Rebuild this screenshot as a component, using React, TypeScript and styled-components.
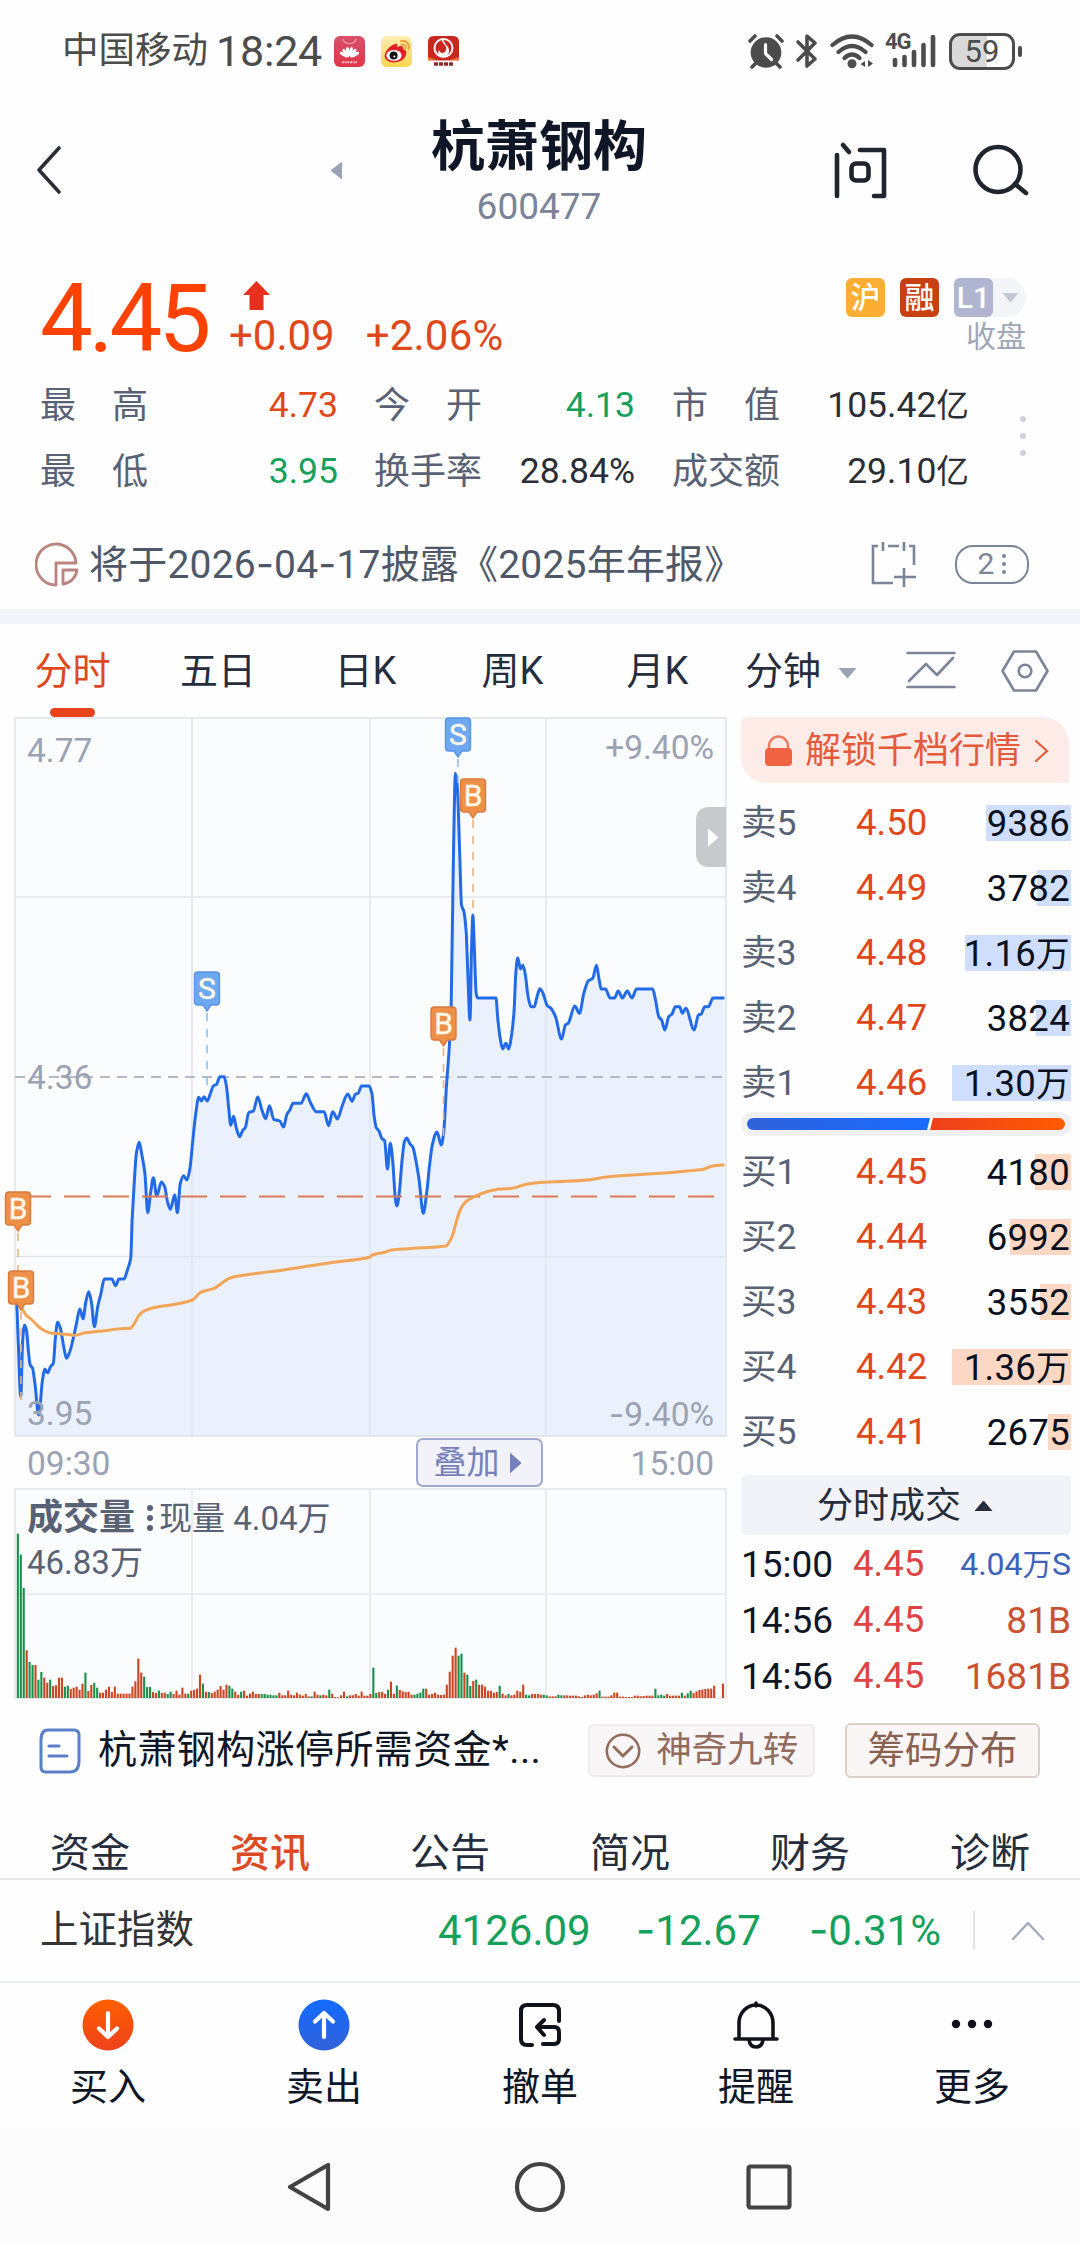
import React from "react";
import styled, { createGlobalStyle } from "styled-components";

const RED = "#e0471b";
const GREEN = "#15a05c";
const INK = "#0f1626";
const SLATE = "#596274";
const MUTED = "#9aa2b3";

const GlobalStyle = createGlobalStyle`
  * { box-sizing: border-box; }
  body { margin: 0; background: #fefefe; }
`;

const Screen = styled.div`
  width: 1080px;
  height: 2244px;
  overflow: hidden;
  display: flex;
  flex-direction: column;
  background: #fefefe;
  color: ${INK};
  font-family: Roboto, "Noto Sans CJK SC", sans-serif;
  white-space: nowrap;
  svg { display: block; flex: none; }
`;

/* ---------- shared text ---------- */

const Text = styled.span<{ $size: number; $color?: string; $ls?: number; $weight?: number; $left?: number }>`
  font-size: ${(p) => p.$size}px;
  line-height: 1;
  color: ${(p) => p.$color ?? INK};
  letter-spacing: ${(p) => p.$ls ?? 0}px;
  font-weight: ${(p) => p.$weight ?? 400};
  margin-left: ${(p) => p.$left ?? 0}px;
`;

const Hyphen = styled.span`
  font-family: Inter, Roboto, sans-serif;
`;

const Unit = styled.span`
  font-size: 0.92em;
`;

/* Numbers with a wide hyphen and a slightly smaller 万/亿 unit. */
const Num = ({ children }: { children: string }) => (
  <>
    {children.split(/(-|万|亿)/).map((part, i) => {
      if (part === "-") return <Hyphen key={i}>-</Hyphen>;
      if (part === "万" || part === "亿") return <Unit key={i}>{part}</Unit>;
      return part;
    })}
  </>
);

/* ---------- status bar ---------- */

const StatusBar = styled.div`
  height: 102px;
  padding: 0 58px 0 62px;
  display: flex;
  align-items: center;
  justify-content: space-between;
`;

const StatusGroup = styled.div<{ $gap?: number }>`
  display: flex;
  align-items: center;
  gap: ${(p) => p.$gap ?? 0}px;
`;

const AppIcons = styled.div`
  display: flex;
  gap: 16px;
  margin-left: 12px;
`;

const Battery = styled.div`
  width: 66px;
  height: 37px;
  margin-left: 12px;
  border: 3px solid #4c4c4c;
  border-radius: 11px;
  background: linear-gradient(90deg, #d9d9d9 59%, #fff 59%);
  display: flex;
  align-items: center;
  justify-content: center;
`;

const BatteryTip = styled.div`
  width: 4px;
  height: 11px;
  margin-left: 3px;
  border-radius: 2px;
  background: #4c4c4c;
`;

/* ---------- header ---------- */

const Header = styled.header`
  height: 138px;
  padding: 0 51px 2px 35px;
  display: grid;
  grid-template-columns: 291px 426px 1fr;
  align-items: center;
`;

const HeaderLeft = styled.div`
  display: flex;
  justify-content: space-between;
  align-items: center;
  margin-right: -16px;
`;

const TitleBlock = styled.div`
  display: flex;
  flex-direction: column;
  align-items: center;
  gap: 13px;
  padding-top: 5px;
`;

const HeaderActions = styled.div`
  display: flex;
  justify-content: space-between;
  padding-left: 82px;
`;

/* ---------- quote ---------- */

const Quote = styled.section`
  height: 250px;
  padding: 30px 0 0 40px;
`;

const PriceRow = styled.div`
  height: 103px;
  display: flex;
`;

const Price = styled.div`
  width: 189px;
  padding-top: 2px;
  font-size: 94px;
  line-height: 94px;
  letter-spacing: -4px;
  color: #ff4200;
`;

const Change = styled.div`
  width: 598px;
  display: flex;
  flex-direction: column;
  padding-top: 11px;
`;

const ArrowUp = styled.svg`
  margin-left: -2px;
`;

const ChangeNumbers = styled.div`
  display: flex;
  gap: 31px;
  margin-top: 4px;
`;

const Badges = styled.div`
  width: 199px;
  display: flex;
  flex-direction: column;
  align-items: flex-end;
  gap: 5px;
  padding-top: 8px;
`;

const BadgeRow = styled.div`
  width: 180px;
  height: 39px;
  display: flex;
  gap: 15px;
  align-items: center;
  border-radius: 8px 20px 20px 8px;
  background: linear-gradient(90deg, #fefefe 60%, #f4f5f8 60%);
`;

const Badge = styled.div<{ $bg: string }>`
  flex: none;
  width: 39px;
  height: 39px;
  border-radius: 6px;
  display: flex;
  align-items: center;
  justify-content: center;
  font-size: 30px;
  line-height: 1;
  font-weight: 500;
  color: #fff;
  background: ${(p) => p.$bg};
`;

const BadgeMenu = styled.div`
  margin-left: -6px;
`;

const Stats = styled.div`
  display: flex;
  align-items: center;
`;

const StatGrid = styled.div`
  width: 929px;
  display: grid;
  grid-template-columns: 108px 190px 36px 108px 153px 37px 108px 189px;
  grid-template-rows: 66px 66px;
  align-items: center;
`;

const StatLabel = styled.div<{ $col: number }>`
  grid-column: ${(p) => p.$col};
  font-size: 36px;
  line-height: 1;
  color: ${SLATE};
`;

const StatValue = styled.div<{ $color: string }>`
  text-align: right;
  font-size: 35.5px;
  line-height: 1;
  color: ${(p) => p.$color};
`;

const Dots = styled.div<{ $gap: number; $size: number; $color: string; $left: number; $lift?: number }>`
  display: flex;
  flex-direction: column;
  gap: ${(p) => p.$gap}px;
  margin-left: ${(p) => p.$left}px;
  margin-bottom: ${(p) => p.$lift ?? 0}px;
  i {
    width: ${(p) => p.$size}px;
    height: ${(p) => p.$size}px;
    border-radius: 50%;
    background: ${(p) => p.$color};
  }
`;

const Notice = styled.div`
  height: 119px;
  padding: 29px 51px 0 35px;
  display: flex;
  align-items: center;
`;

const NoticeText = styled.div`
  width: 782px;
  margin-left: 10px;
  font-size: 39px;
  line-height: 1;
  letter-spacing: 0.2px;
  color: #4f5869;
`;

const CountPill = styled.div`
  width: 74px;
  height: 39px;
  margin-left: auto;
  border: 2.5px solid #7c8598;
  border-radius: 18px;
  display: flex;
  align-items: center;
  justify-content: center;
  font-size: 30px;
  line-height: 1;
  color: #7c8598;
`;

const Band = styled.div`
  height: 15px;
  background: #f3f5fa;
`;

/* ---------- period tabs ---------- */

const PeriodTabs = styled.nav`
  height: 93px;
  display: grid;
  grid-template-columns: 145px 146px 149px 145px 145px 154px 94px 1fr;
`;

const PeriodTab = styled.div<{ $active?: boolean }>`
  position: relative;
  display: flex;
  align-items: center;
  justify-content: center;
  padding-top: 1px;
  font-size: 38px;
  line-height: 1;
  color: ${(p) => (p.$active ? RED : "#262d3d")};
  &::after {
    content: "";
    display: ${(p) => (p.$active ? "block" : "none")};
    position: absolute;
    bottom: 0;
    width: 45px;
    height: 9px;
    border-radius: 5px;
    background: #e8431a;
  }
`;

const PeriodMenu = styled.div`
  display: flex;
  align-items: center;
  gap: 17px;
  padding-left: 15px;
`;

const MenuCaret = styled.div`
  padding-top: 6px;
`;

const IconCell = styled.div<{ $right?: number }>`
  display: flex;
  align-items: center;
  justify-content: center;
  padding-right: ${(p) => p.$right ?? 0}px;
`;

/* ---------- body: charts + book ---------- */

const Body = styled.main`
  height: 981px;
  display: grid;
  grid-template-columns: 741px 330px;
`;

const ChartColumn = styled.div`
  position: relative;
  display: flex;
  flex-direction: column;
`;

const AxisRow = styled.div`
  height: 51px;
  padding: 0 27px 0 27px;
  display: flex;
  align-items: center;
  margin-top: -1px;
`;

const AxisTime = styled.div`
  padding-top: 3px;
  font-size: 33.5px;
  line-height: 1;
  color: ${MUTED};
`;

const OverlayButton = styled.div`
  width: 127px;
  height: 49px;
  margin-left: 306px;
  margin-right: auto;
  padding: 0 4px 0 0;
  border: 2px solid #9da9d0;
  border-radius: 7px;
  background: #f2f3fa;
  display: flex;
  align-items: center;
  justify-content: center;
  gap: 11px;
`;

const ChartLabel = styled.div<{ $top: number; $right?: boolean }>`
  position: absolute;
  top: ${(p) => p.$top}px;
  ${(p) => (p.$right ? "right: 27px;" : "left: 27px;")}
  font-size: 33.5px;
  line-height: 34px;
  color: ${MUTED};
`;

const VolumeLegend = styled.div`
  position: absolute;
  top: 783px;
  left: 27px;
  display: flex;
  flex-direction: column;
  gap: 8px;
`;

const LegendLine = styled.div`
  height: 36px;
  display: flex;
  align-items: center;
`;

const DrawerHandle = styled.div`
  position: absolute;
  top: 90px;
  left: 696px;
  width: 30px;
  height: 60px;
  border-radius: 12px 0 0 12px;
  background: #c8cacd;
  display: flex;
  align-items: center;
  justify-content: center;
  padding-left: 4px;
`;

const Book = styled.div`
  display: flex;
  flex-direction: column;
`;

const Unlock = styled.div`
  width: 328px;
  height: 66px;
  margin-bottom: 7px;
  padding: 2px 22px 0 24px;
  border-radius: 6px 26px 0 26px;
  background: #fdebe8;
  display: flex;
  align-items: center;
  gap: 13px;
`;

const Level = styled.div`
  height: 65px;
  display: grid;
  grid-template-columns: 115px 90px 1fr;
  align-items: center;
`;

const LevelText = styled.div<{ $size: number; $color: string }>`
  padding-top: 2px;
  font-size: ${(p) => p.$size}px;
  line-height: 1;
  color: ${(p) => p.$color};
`;

const LevelQty = styled.div<{ $fill: number; $color: string }>`
  height: 36px;
  padding: 1px 1px 0 0;
  text-align: right;
  font-size: 36.5px;
  line-height: 36px;
  letter-spacing: 0.3px;
  color: #0a1020;
  background: linear-gradient(${(p) => p.$color}, ${(p) => p.$color}) right / ${(p) => p.$fill}px 100% no-repeat;
`;

const RatioTrack = styled.div`
  height: 24px;
  margin: -3px 0 3px;
  padding: 6px;
  border-radius: 12px;
  background: #f0f0f1;
`;

const Ratio = styled.div`
  height: 12px;
  border-radius: 6px;
  overflow: hidden;
  display: grid;
  grid-template-columns: 183px 137px;
  background: #fff;
`;

const RatioSell = styled.div`
  background: linear-gradient(90deg, #3062d8, #196bff);
  clip-path: polygon(0 0, 100% 0, calc(100% - 3px) 100%, 0 100%);
`;

const RatioBuy = styled.div`
  background: linear-gradient(90deg, #ee401c, #ff5c00);
  clip-path: polygon(3px 0, 100% 0, 100% 100%, 0 100%);
`;

const TradesHeader = styled.div`
  height: 60px;
  margin-top: 11px;
  padding: 1px 2px 0 0;
  border-radius: 6px;
  background: #f2f3f8;
  display: flex;
  align-items: center;
  justify-content: center;
  gap: 13px;
`;

const Trade = styled.div`
  height: 56px;
  padding-top: 2px;
  display: grid;
  grid-template-columns: 112px 90px 1fr;
  align-items: center;
`;

const TradeQty = styled.div<{ $color: string; $size: number }>`
  text-align: right;
  font-size: ${(p) => p.$size}px;
  line-height: 1;
  color: ${(p) => p.$color};
`;

/* ---------- lower panels ---------- */

const Promo = styled.div`
  height: 108px;
  padding: 0 40px 3px 39px;
  display: flex;
  align-items: center;
`;

const PromoText = styled.div`
  width: 491px;
  margin-left: 17px;
  font-size: 39px;
  line-height: 1;
  letter-spacing: 0.4px;
`;

const Chip = styled.div<{ $w: number; $h: number; $border: string; $bg: string; $left?: number }>`
  width: ${(p) => p.$w}px;
  height: ${(p) => p.$h}px;
  margin-left: ${(p) => p.$left ?? 0}px;
  border: 2px solid ${(p) => p.$border};
  border-radius: 6px;
  background: ${(p) => p.$bg};
  display: flex;
  align-items: center;
  justify-content: center;
  gap: 15px;
`;

const SectionTabs = styled.nav`
  height: 74px;
  border-bottom: 2px solid #e6e7e9;
  display: grid;
  grid-template-columns: repeat(6, 1fr);
`;

const SectionTab = styled.div<{ $active?: boolean }>`
  display: flex;
  align-items: center;
  justify-content: center;
  padding-top: 23px;
  font-size: 40px;
  line-height: 1;
  font-weight: ${(p) => (p.$active ? 500 : 400)};
  color: ${(p) => (p.$active ? "#dc4a26" : "#262d3d")};
`;

const IndexRow = styled.div`
  height: 101px;
  padding-left: 40px;
  display: grid;
  grid-template-columns: 398px 198px 173px 164px 38px 1fr;
  align-items: center;
`;

const Separator = styled.div`
  width: 2px;
  height: 39px;
  background: #e2e4e8;
`;

const ActionBar = styled.nav`
  height: 149px;
  border-top: 2px solid #ebeeee;
  display: grid;
  grid-template-columns: repeat(5, 1fr);
`;

const Action = styled.div`
  display: flex;
  flex-direction: column;
  align-items: center;
  padding-top: 16px;
  gap: 17px;
`;

const SystemBar = styled.div`
  flex: 1;
  background: #fcfcfc;
  display: flex;
  align-items: center;
  padding-left: 286px;
`;

const SystemKey = styled.div<{ $gap: number }>`
  margin-right: ${(p) => p.$gap}px;
`;

/* ---------- icons ---------- */

const Triangle = ({ w, h, dir, color }: { w: number; h: number; dir: "left" | "right" | "up" | "down"; color: string }) => {
  const pts = {
    left: `${w},1 ${w},${h - 1} 1,${h / 2}`,
    right: `0,1 0,${h - 1} ${w - 1},${h / 2}`,
    up: `1,${h} ${w - 1},${h} ${w / 2},1`,
    down: `1,0 ${w - 1},0 ${w / 2},${h - 1}`,
  }[dir];
  return (
    <svg width={w} height={h}>
      <polygon points={pts} fill={color} stroke={color} strokeWidth="1" strokeLinejoin="round" />
    </svg>
  );
};

const HuaweiIcon = () => (
  <svg width="31" height="31" viewBox="0 0 31 31">
    <defs>
      <linearGradient id="hw" x1="0" y1="0" x2="0" y2="1">
        <stop offset="0" stopColor="#d8506b" />
        <stop offset="1" stopColor="#e03548" />
      </linearGradient>
    </defs>
    <rect width="31" height="31" rx="6" fill="url(#hw)" />
    <path d="M9 3c1 6 12 6 13 0" fill="none" stroke="#f3a5b1" strokeWidth="1.2" />
    <g fill="#fff">
      {[-62, -38, -13, 13, 38, 62].map((a) => (
        <ellipse key={a} cx="15.5" cy="15.500" rx="1.700" ry="4.800" transform={`rotate(${a} 15.5 21.5)`} />
      ))}
    </g>
    <path d="M8 26.300h15" stroke="#fff" strokeWidth="2" strokeDasharray="1.800 0.900" opacity="0.750" />
  </svg>
);

const WeiboIcon = () => (
  <svg width="31" height="31" viewBox="0 0 31 31">
    <defs>
      <linearGradient id="wb" x1="0" y1="0" x2="0" y2="1">
        <stop offset="0" stopColor="#fdeeb5" />
        <stop offset="1" stopColor="#fcd54c" />
      </linearGradient>
    </defs>
    <rect width="31" height="31" rx="6" fill="url(#wb)" />
    <path d="M14 8c2-1 3 0 2 3 4-2 7-1 6 2 4 1 4 5 2 8-3 6-16 8-20 1-2-5 5-13 10-14z" fill="#df2127" />
    <ellipse cx="13" cy="19.400" rx="7.600" ry="5.400" fill="#fff" />
    <circle cx="12.600" cy="19.600" r="4" fill="#111" />
    <circle cx="13.400" cy="20.600" r="1" fill="#fff" />
    <path d="M20 5c5-1 9 3 7.500 8M20.500 8.500c3-.4 4.800 1.500 4 4" fill="none" stroke="#f0a23a" strokeWidth="2" strokeLinecap="round" />
  </svg>
);

const FlameIcon = () => (
  <svg width="31" height="31" viewBox="0 0 31 31">
    <path d="M6 0h19q6 0 6 6v19H0V6q0-6 6-6z" fill="#c9271f" />
    <path d="M0 21q15 7 31 0v3.500H0z" fill="#e9722f" />
    <circle cx="15.500" cy="12" r="9" fill="none" stroke="#fff" strokeWidth="2" />
    <path d="M15 2c-4 4 5 7 3 12-1 4-6 4-7 0-2 3 0 7 4 7 6 0 8-7 4-11-2-3-4-5-4-8z" fill="#fff" />
    <rect y="24.500" width="31" height="7" fill="#fff" />
    <path d="M6 28h20" stroke="#8f2a2a" strokeWidth="3.600" strokeDasharray="4 1" />
  </svg>
);

const AlarmIcon = () => (
  <svg width="36" height="35" viewBox="0 0 36 35">
    <g stroke="#4c4c4c" strokeWidth="3.600" strokeLinecap="round" fill="none">
      <path d="M2 7l5-5M34 7l-5-5M8 29l-4 4M28 29l4 4" />
    </g>
    <circle cx="18" cy="18.500" r="15.300" fill="#4c4c4c" />
    <path d="M17.500 10.500v9l6 6" fill="none" stroke="#fff" strokeWidth="3.200" strokeLinecap="round" strokeLinejoin="round" />
  </svg>
);

const BluetoothIcon = () => (
  <svg width="24" height="36" viewBox="0 0 24 36">
    <path d="M3 9l17 17-8 7V3l8 7L3 27" fill="none" stroke="#4c4c4c" strokeWidth="3.600" strokeLinecap="round" strokeLinejoin="round" />
  </svg>
);

const WifiIcon = () => (
  <svg width="44" height="35" viewBox="0 0 44 35">
    <g fill="none" stroke="#4c4c4c" strokeWidth="4.200" strokeLinecap="round">
      <path d="M2.500 11q19.500-17 39 0M8.500 18q13.500-12 27 0M14.500 24q7.500-7 15 0" />
    </g>
    <circle cx="22" cy="29.800" r="4.500" fill="#4c4c4c" />
    <path d="M35 27v6l-4.500-3zM38 26v7l5-3.500z" fill="#4c4c4c" />
  </svg>
);

const NetworkLabel = styled.div`
  position: absolute;
  top: 0;
  left: 0;
  font-size: 22px;
  line-height: 22px;
  font-weight: 700;
  letter-spacing: -1px;
  color: #4c4c4c;
`;

const Signal = styled.div`
  position: relative;
  width: 52px;
  height: 40px;
  padding: 2px 0 0 2px;
`;

const SignalIcon = () => (
  <Signal>
    <svg width="50" height="36" viewBox="2 0 50 36">
      <g stroke="#4c4c4c" strokeWidth="4.600" strokeLinecap="round">
        <path d="M10 27v5M19.500 24v8M29 19v13M38.500 12v20M48 4v28" />
      </g>
    </svg>
    <NetworkLabel>4G</NetworkLabel>
  </Signal>
);

const AskIcon = () => (
  <svg width="53" height="58" viewBox="0 0 53 58">
    <g fill="none" stroke="#20252d" strokeWidth="4.600" strokeLinecap="round" strokeLinejoin="round">
      <path d="M3 14v41M9 4l6 7M26 9h24v46H40" />
      <rect x="17.500" y="22.500" width="17" height="17" rx="4.500" />
    </g>
  </svg>
);

const SearchIcon = () => (
  <svg width="56" height="58" viewBox="0 0 56 58">
    <g fill="none" stroke="#20252d" strokeWidth="4.600" strokeLinecap="round">
      <circle cx="25" cy="28.500" r="22.500" />
      <path d="M42 43l11 9" />
    </g>
  </svg>
);

const PieIcon = () => (
  <svg width="44" height="46" viewBox="0 0 44 46">
    <g fill="none" stroke="#bb847f" strokeWidth="2.800" strokeLinejoin="round">
      <path d="M21 44A20 20.500 0 1 1 41 22H21z" />
      <path d="M28 29h14a16 16 0 0 1-14 14z" />
    </g>
  </svg>
);

const CalendarIcon = () => (
  <svg width="46" height="47" viewBox="0 0 46 47">
    <path d="M7 5H2v37h20M17 5h11M38 5h5v19M12 1v9M33 1v9M33 27v19M23 36h22" fill="none" stroke="#7c8598" strokeWidth="2.600" />
  </svg>
);

const LineIcon = () => (
  <svg width="50" height="40" viewBox="0 0 50 40">
    <g fill="none" stroke="#7c8598" strokeWidth="2.600" strokeLinecap="round" strokeLinejoin="round">
      <path d="M1.500 2h47M1.500 36h47M3 30l17-17 11 11L47 7" />
    </g>
  </svg>
);

const HexIcon = () => (
  <svg width="48" height="42" viewBox="0 0 48 42">
    <g fill="none" stroke="#7c8598" strokeWidth="2.600" strokeLinejoin="round">
      <path d="M13 1.500h22L46.500 21 35 40.500H13L1.500 21z" />
      <circle cx="24" cy="21" r="6.300" />
    </g>
  </svg>
);

const LockIcon = () => (
  <svg width="27" height="32" viewBox="0 0 27 32">
    <path d="M4 14v-3a9.500 9.500 0 0 1 19 0v3" fill="none" stroke="#ee7a62" strokeWidth="2.400" />
    <rect y="13" width="27" height="18" rx="4" fill="#f06443" />
  </svg>
);

const BuyIcon = () => (
  <svg width="52" height="52" viewBox="0 0 52 52">
    <defs>
      <linearGradient id="buy" x1="0" y1="0" x2="0" y2="1">
        <stop offset="0" stopColor="#ff5f00" />
        <stop offset="1" stopColor="#ee421c" />
      </linearGradient>
    </defs>
    <circle cx="26" cy="26" r="25.500" fill="url(#buy)" />
    <path d="M26 14v24M17 29.500l9 8.500 9-8.500" fill="none" stroke="#fff" strokeWidth="4.200" strokeLinecap="round" strokeLinejoin="round" />
  </svg>
);

const SellIcon = () => (
  <svg width="52" height="52" viewBox="0 0 52 52">
    <defs>
      <linearGradient id="sell" x1="0" y1="0" x2="0" y2="1">
        <stop offset="0" stopColor="#146bff" />
        <stop offset="1" stopColor="#3161d8" />
      </linearGradient>
    </defs>
    <circle cx="26" cy="26" r="25.500" fill="url(#sell)" />
    <path d="M26 38V14M17 22.500l9-8.500 9 8.500" fill="none" stroke="#fff" strokeWidth="4.200" strokeLinecap="round" strokeLinejoin="round" />
  </svg>
);

const CancelIcon = () => (
  <svg width="52" height="52" viewBox="0 0 52 52">
    <g fill="none" stroke="#10131a" strokeWidth="4" strokeLinecap="round" strokeLinejoin="round">
      <path d="M18 46h-5q-6 0-6-6V12q0-6 6-6h26q6 0 6 6v10" />
      <path d="M30 21l-7 7 7 8M24 28h16q5 0 5 5v7q0 5-5 5H29" />
    </g>
  </svg>
);

const BellIcon = () => (
  <svg width="52" height="52" viewBox="0 0 52 52">
    <g fill="none" stroke="#10131a" strokeWidth="3.600" strokeLinecap="round" strokeLinejoin="round">
      <path d="M26 4v3M9 40V24a17 18 0 0 1 34 0v16M5 40h42" />
      <path d="M19 41q1 7 7 7t7-7" />
    </g>
  </svg>
);

const MoreIcon = () => (
  <svg width="52" height="52" viewBox="0 0 52 52">
    <g fill="#10131a">
      <circle cx="10" cy="25" r="4.200" />
      <circle cx="26" cy="25" r="4.200" />
      <circle cx="42" cy="25" r="4.200" />
    </g>
  </svg>
);

/* ---------- price chart ---------- */

type Pt = [number, number];

const toPoints = (s: string): Pt[] => s.trim().split(/\s+/).map((p) => p.split(",").map(Number) as Pt);

const SAMPLES_PER_PX = 2.119;
const TICKS_PER_PX = 3;

const priceSeries = toPoints(`
35,2050 38,2140 44,2330 48,2160 52,2116 56,2130 60,2190 64,2235 69,2245 74,2290 82,2385 90,2280 95,2247 101,2258 107,2240
113,2230 117,2160 122,2107 128,2125 135,2180 141,2215 148,2195 156,2150 162,2110 169,2067 176,2096 182,2045 188,2015 194,2050
200,2120 207,2060 214,2020 221,1977 237,1977 245,1997 252,1977 263,1977 270,1950 277,1915 280,1800 284,1700 289,1600 295,1567
300,1600 307,1660 313,1778 319,1720 325,1673 332,1728 342,1686 349,1700 355,1745 361,1768 370,1725 376,1778 382,1690 389,1667
396,1680 402,1650 408,1570 415,1480 421,1432 427,1443 432,1430 439,1443 446,1420 452,1398 459,1393 466,1370 475,1370 480,1400
485,1470 489,1516 495,1489 501,1525 508,1550 514,1532 520,1522 527,1478 537,1473 546,1431 555,1470 563,1496 571,1457 580,1498
593,1503 601,1521 608,1483 614,1470 621,1450 638,1450 649,1421 658,1448 670,1475 687,1475 696,1517 705,1475 715,1497 725,1458
737,1422 746,1444 753,1422 759,1420 766,1398 782,1398 788,1420 793,1490 797,1522 803,1533 809,1555 815,1562 821,1647 827,1570
832,1620 838,1740 841,1758 846,1720 852,1620 857,1565 862,1554 868,1570 875,1582 881,1620 888,1680 897,1780 904,1720 910,1640
916,1575 926,1536 935,1575 940,1540 946,1400 953,1260 956,1150 961,700 965,460 969,500 974,700 978,855 983,875 988,940 991,1050
996,1200 999,1000 1002,885 1005,980 1009,1120 1012,1134 1051,1134 1055,1200 1060,1255 1065,1287 1072,1270 1078,1287 1083,1255
1089,1180 1093,1060 1097,1013 1103,1047 1108,1036 1113,1062 1119,1130 1125,1160 1132,1160 1138,1130 1144,1106 1150,1118
1160,1158 1166,1163 1177,1190 1190,1257 1198,1215 1204,1210 1218,1158 1228,1180 1237,1120 1247,1082 1256,1075 1264,1036
1269,1075 1274,1107 1283,1107 1293,1134 1302,1134 1310,1113 1319,1134 1329,1113 1339,1134 1349,1107 1383,1107 1389,1140
1396,1190 1402,1200 1409,1230 1417,1190 1424,1182 1431,1160 1440,1160 1446,1180 1453,1165 1471,1230 1480,1185 1486,1182
1493,1160 1501,1160 1511,1134 1535,1134`);

const averageSeries = toPoints(`
45,2065 55,2085 68,2100 80,2118 95,2133 110,2140 140,2143 160,2146 180,2138 200,2135 218,2133 233,2130 255,2126 277,2125
284,2112 295,2085 307,2072 330,2062 365,2054 408,2040 425,2017 452,2006 489,1973 530,1963 600,1950 700,1928 783,1912 790,1904
815,1897 830,1890 865,1886 945,1878 951,1868 958,1850 968,1800 975,1770 988,1744 1010,1727 1030,1716 1060,1707 1085,1705
1115,1693 1150,1687 1200,1684 1250,1679 1280,1672 1330,1666 1400,1660 1450,1654 1490,1648 1510,1638 1535,1635`);

const smoothPath = (series: Pt[]) => {
  const p = series.map(([x, y]) => [x / SAMPLES_PER_PX, y / TICKS_PER_PX - 97] as Pt);
  const slope = (i: number) => (p[i + 1][1] - p[i][1]) / (p[i + 1][0] - p[i][0]);
  const tangent = (i: number) => {
    if (i === 0 || i === p.length - 1) return 0;
    const a = slope(i - 1);
    const b = slope(i);
    return a * b <= 0 ? 0 : (2 * a * b) / (a + b);
  };
  let d = `M${p[0][0].toFixed(1)} ${p[0][1].toFixed(1)}`;
  for (let i = 0; i < p.length - 1; i++) {
    const h = (p[i + 1][0] - p[i][0]) / 3;
    const c = [p[i][0] + h, p[i][1] + h * tangent(i), p[i + 1][0] - h, p[i + 1][1] - h * tangent(i + 1), p[i + 1][0], p[i + 1][1]];
    d += `C${c.map((v) => v.toFixed(1)).join(" ")}`;
  }
  return d;
};

const markers: { kind: "S" | "B"; x: number; y: number; stem: number }[] = [
  { kind: "S", x: 458, y: 0, stem: 68 },
  { kind: "B", x: 473, y: 61, stem: 195 },
  { kind: "S", x: 207, y: 254, stem: 372 },
  { kind: "B", x: 443.5, y: 289, stem: 422 },
  { kind: "B", x: 18, y: 474, stem: 560 },
  { kind: "B", x: 21, y: 553, stem: 685 },
];

const GRID_X = [192, 370, 546];

const PriceChart = () => {
  const line = smoothPath(priceSeries);
  return (
    <svg width="741" height="721" viewBox="0 0 741 721">
      <rect x="15" y="1" width="711" height="718" fill="#fbfcfe" stroke="#e3e6eb" strokeWidth="1.800" />
      <g stroke="#e3e5e9" strokeWidth="1.600">
        {GRID_X.map((x) => (
          <path key={x} d={`M${x} 1V719`} />
        ))}
        <path d="M15 180H726M15 539.500H726" />
      </g>
      <path d={`${line}L724.400 719L15.500 719L15.500 585Z`} fill="#d6e4fb" opacity="0.450" />
      <path d="M15 360H726" stroke="#b4b9c6" strokeWidth="2" strokeDasharray="10 7" />
      <path d={line} fill="none" stroke="#236ae6" strokeWidth="3" strokeLinejoin="round" />
      <path d="M15 479.500H726" stroke="#dc7857" strokeWidth="1.800" strokeDasharray="26 13" strokeDashoffset="-10" />
      <path d={smoothPath(averageSeries)} fill="none" stroke="#f2a457" strokeWidth="3" />
      {markers.map((m) => {
        const blue = m.kind === "S";
        return (
          <g key={`${m.x}-${m.y}`}>
            <path d={`M${m.x} ${m.y + 42}V${m.stem}`} stroke={blue ? "#8fbdf2" : "#f0b27c"} strokeWidth="1.600" strokeDasharray="8 8" />
            <path
              d={`M${m.x - 9} ${m.y + 1}h18q3.500 0 3.500 3.500v26q0 3.500-3.500 3.500h-5l-4 6-4-6h-5q-3.500 0-3.500-3.500v-26q0-3.500 3.500-3.500z`}
              fill={blue ? "#6ea8f0" : "#ee9047"}
              stroke={blue ? "#5a94e6" : "#d87a3c"}
              strokeWidth="1.400"
            />
            <text x={m.x} y={m.y + 28} fontSize="30" textAnchor="middle" fill="#fff8ea" stroke="#fff8ea" strokeWidth="0.400">
              {m.kind}
            </text>
          </g>
        );
      })}
    </svg>
  );
};

/* ---------- volume chart ---------- */

const volumes = `
G493 G430 G330 R143 G108 G99 R99 G55 G78 R61 R45 G55 R36 R38 R61 R61 G34 G37 R27 R31 R34 R25 R43 G76 R21 R39 G45 G31 R16 R16
R25 R34 R18 R34 R13 R13 R13 R13 R13 R34 R50 R118 R76 G64 G33 G33 R18 R15 G22 R15 R16 G12 G19 R12 R22 R10 R31 R13 G13 R22
R24 R28 R70 G43 R19 G18 R15 R19 R25 R36 R25 R40 G37 G28 R19 R10 G19 R22 R7 R13 R19 R12 R12 G12 G12 G10 G10 G8 G8 R16
R8 R8 R22 R10 R8 R16 R10 R7 R12 R5 G5 R19 R10 G8 R10 R8 G25 R13 R3 R2 R8 R19 G5 R8 R8 R12 R7 R19 R7 R7
R12 G91 G15 R18 R18 R12 G25 R49 R13 G37 R24 R20 R18 R19 R10 G10 G13 G16 G28 R28 R10 R12 R16 R10 R9 R10 R40 R79 R127 R151
G127 G133 R76 G70 G36 R51 G55 R40 R40 R34 R22 R22 R16 R18 G37 R13 R8 G12 R8 R10 R22 R18 R40 G10 G8 R12 R12 R12 R10 G10
G8 R5 R5 R5 G10 G8 R8 R8 R7 R7 R7 R5 R3 R8 R10 R8 R10 R14 G22 R4 R4 R4 R8 R16 R16 R4 R4 R3 R3 R3
R7 R7 R5 R6 R7 R7 R7 G28 G8 G10 G7 R12 R7 R7 R7 R7 G16 R7 G14 G22 R15 R20 R24 R25 R27 R28 R28 R37 R0 R0
R43`
  .trim()
  .split(/\s+/);

const VolumeChart = () => (
  <svg width="741" height="212" viewBox="0 0 741 212">
    <rect x="15" y="1" width="711" height="209" fill="#fbfcfe" stroke="#e6e8ec" strokeWidth="1.800" />
    <g stroke="#e6e8ec" strokeWidth="1.600">
      {GRID_X.map((x) => (
        <path key={x} d={`M${x} 1V210`} />
      ))}
      <path d="M15 106H726" />
    </g>
    {volumes.map((v, i) => {
      const h = Number(v.slice(1)) / TICKS_PER_PX;
      return <rect key={i} x={16.8 + i * 2.938} y={210 - h} width="2.100" height={h} fill={v[0] === "G" ? "#17914a" : "#cc4520"} />;
    })}
  </svg>
);

/* ---------- data ---------- */

const sells = [
  { name: "卖5", price: "4.50", qty: "9386", fill: 85 },
  { name: "卖4", price: "4.49", qty: "3782", fill: 34 },
  { name: "卖3", price: "4.48", qty: "1.16万", fill: 106 },
  { name: "卖2", price: "4.47", qty: "3824", fill: 35 },
  { name: "卖1", price: "4.46", qty: "1.30万", fill: 119 },
];

const buys = [
  { name: "买1", price: "4.45", qty: "4180", fill: 36 },
  { name: "买2", price: "4.44", qty: "6992", fill: 61 },
  { name: "买3", price: "4.43", qty: "3552", fill: 31 },
  { name: "买4", price: "4.42", qty: "1.36万", fill: 119 },
  { name: "买5", price: "4.41", qty: "2675", fill: 23 },
];

const trades = [
  { time: "15:00", qty: "4.04万S", color: "#3d62b8", size: 32 },
  { time: "14:56", qty: "81B", color: "#cb5230", size: 37 },
  { time: "14:56", qty: "1681B", color: "#cb5230", size: 37 },
];

const BookLevel = ({ name, price, qty, fill, color }: { name: string; price: string; qty: string; fill: number; color: string }) => (
  <Level>
    <LevelText $size={35.5} $color={SLATE}>{name}</LevelText>
    <LevelText $size={36.5} $color={RED}>{price}</LevelText>
    <LevelQty $fill={fill} $color={color}><Num>{qty}</Num></LevelQty>
  </Level>
);

const actions = [
  { icon: <BuyIcon />, label: "买入" },
  { icon: <SellIcon />, label: "卖出" },
  { icon: <CancelIcon />, label: "撤单" },
  { icon: <BellIcon />, label: "提醒" },
  { icon: <MoreIcon />, label: "更多" },
];

export default function App() {
  return (
    <Screen>
      <GlobalStyle />

      <StatusBar>
        <StatusGroup>
          <Text $size={36.5} $color="#4c4c4c">中国移动</Text>
          <Text $size={43} $color="#4c4c4c" $left={8} $ls={-0.2}>18:24</Text>
          <AppIcons>
            <HuaweiIcon />
            <WeiboIcon />
            <FlameIcon />
          </AppIcons>
        </StatusGroup>
        <StatusGroup>
          <StatusGroup $gap={11}>
            <AlarmIcon />
            <BluetoothIcon />
            <WifiIcon />
            <SignalIcon />
          </StatusGroup>
          <Battery>
            <Text $size={31} $color="#4c4c4c">59</Text>
          </Battery>
          <BatteryTip />
        </StatusGroup>
      </StatusBar>

      <Header>
        <HeaderLeft>
          <svg width="28" height="50" viewBox="0 0 28 50">
            <path d="M24 3L4 25l20 22" fill="none" stroke="#2b2e34" strokeWidth="3.600" strokeLinecap="round" strokeLinejoin="round" />
          </svg>
          <Triangle w={12} h={19} dir="left" color="#9aa3b5" />
        </HeaderLeft>
        <TitleBlock>
          <Text $size={54} $weight={700}>杭萧钢构</Text>
          <Text $size={37} $color="#7a8397">600477</Text>
        </TitleBlock>
        <HeaderActions>
          <AskIcon />
          <SearchIcon />
        </HeaderActions>
      </Header>

      <Quote>
        <PriceRow>
          <Price>4.45</Price>
          <Change>
            <ArrowUp width="50" height="30" viewBox="0 0 50 30">
              <path d="M29.500 0L43 14h-6.500v15h-14V14H16z" fill="#e8301f" />
            </ArrowUp>
            <ChangeNumbers>
              <Text $size={42} $color={RED}>+0.09</Text>
              <Text $size={42} $color={RED} $ls={0.2}>+2.06%</Text>
            </ChangeNumbers>
          </Change>
          <Badges>
            <BadgeRow>
              <Badge $bg="#fcad33">沪</Badge>
              <Badge $bg="#c93f14">融</Badge>
              <Badge $bg="#b0b6d2">L1</Badge>
              <BadgeMenu>
                <Triangle w={17} h={10} dir="down" color="#c3c9d4" />
              </BadgeMenu>
            </BadgeRow>
            <Text $size={30} $color="#a0a8b8">收盘</Text>
          </Badges>
        </PriceRow>
        <Stats>
          <StatGrid>
            <StatLabel $col={1}>最　高</StatLabel>
            <StatValue $color={RED}>4.73</StatValue>
            <StatLabel $col={4}>今　开</StatLabel>
            <StatValue $color={GREEN}>4.13</StatValue>
            <StatLabel $col={7}>市　值</StatLabel>
            <StatValue $color="#2b2e34"><Num>105.42亿</Num></StatValue>
            <StatLabel $col={1}>最　低</StatLabel>
            <StatValue $color={GREEN}>3.95</StatValue>
            <StatLabel $col={4}>换手率</StatLabel>
            <StatValue $color="#2b2e34">28.84%</StatValue>
            <StatLabel $col={7}>成交额</StatLabel>
            <StatValue $color="#2b2e34"><Num>29.10亿</Num></StatValue>
          </StatGrid>
          <Dots $gap={11} $size={6} $color="#cdd2de" $left={51} $lift={6}>
            <i />
            <i />
            <i />
          </Dots>
        </Stats>
      </Quote>

      <Notice>
        <PieIcon />
        <NoticeText><Num>将于2026-04-17披露《2025年年报》</Num></NoticeText>
        <CalendarIcon />
        <CountPill>
          2
          <Dots $gap={4} $size={4} $color="#7c8598" $left={8}>
            <i />
            <i />
            <i />
          </Dots>
        </CountPill>
      </Notice>
      <Band />

      <PeriodTabs>
        <PeriodTab $active>分时</PeriodTab>
        <PeriodTab>五日</PeriodTab>
        <PeriodTab>日K</PeriodTab>
        <PeriodTab>周K</PeriodTab>
        <PeriodTab>月K</PeriodTab>
        <PeriodMenu>
          <Text $size={38} $color="#262d3d">分钟</Text>
          <MenuCaret>
            <Triangle w={19} h={11} dir="down" color="#9aa3b5" />
          </MenuCaret>
        </PeriodMenu>
        <IconCell>
          <LineIcon />
        </IconCell>
        <IconCell $right={8}>
          <HexIcon />
        </IconCell>
      </PeriodTabs>

      <Body>
        <ChartColumn>
          <PriceChart />
          <ChartLabel $top={17}>4.77</ChartLabel>
          <ChartLabel $top={14} $right>+9.40%</ChartLabel>
          <ChartLabel $top={344}>4.36</ChartLabel>
          <ChartLabel $top={680}>3.95</ChartLabel>
          <ChartLabel $top={680} $right><Num>-9.40%</Num></ChartLabel>
          <DrawerHandle>
            <Triangle w={11} h={19} dir="right" color="#fff" />
          </DrawerHandle>
          <AxisRow>
            <AxisTime>09:30</AxisTime>
            <OverlayButton>
              <Text $size={33} $color="#7681bc">叠加</Text>
              <Triangle w={12} h={22} dir="right" color="#7681bc" />
            </OverlayButton>
            <AxisTime>15:00</AxisTime>
          </AxisRow>
          <VolumeChart />
          <VolumeLegend>
            <LegendLine>
              <Text $size={36} $weight={700} $color={SLATE}>成交量</Text>
              <Dots $gap={4} $size={6} $color={SLATE} $left={12}>
                <i />
                <i />
                <i />
              </Dots>
              <Text $size={33} $color={SLATE} $left={6}>现量 4.04万</Text>
            </LegendLine>
            <LegendLine>
              <Text $size={33} $color={SLATE}>46.83万</Text>
            </LegendLine>
          </VolumeLegend>
        </ChartColumn>

        <Book>
          <Unlock>
            <LockIcon />
            <Text $size={36} $color="#e65a3c">解锁千档行情</Text>
            <svg width="15" height="24" viewBox="0 0 15 24">
              <path d="M2 2l11 10L2 22" fill="none" stroke="#e65a3c" strokeWidth="2.200" strokeLinecap="round" />
            </svg>
          </Unlock>
          {sells.map((l) => (
            <BookLevel key={l.name} {...l} color="#cfdefc" />
          ))}
          <RatioTrack>
            <Ratio>
              <RatioSell />
              <RatioBuy />
            </Ratio>
          </RatioTrack>
          {buys.map((l) => (
            <BookLevel key={l.name} {...l} color="#fcd7c3" />
          ))}
          <TradesHeader>
            <Text $size={36} $color="#262d3d">分时成交</Text>
            <Triangle w={19} h={11} dir="up" color="#262d3d" />
          </TradesHeader>
          {trades.map((t, i) => (
            <Trade key={i}>
              <Text $size={37}>{t.time}</Text>
              <Text $size={36.5} $color="#dd4444">4.45</Text>
              <TradeQty $color={t.color} $size={t.size}><Num>{t.qty}</Num></TradeQty>
            </Trade>
          ))}
        </Book>
      </Body>

      <Promo>
        <svg width="42" height="46" viewBox="0 0 42 46">
          <path d="M9 2h26q5 0 5 5v26q0 11-9 11H7q-5 0-5-5V12Q2 2 9 2z" fill="none" stroke="#5b7fc8" strokeWidth="3" />
          <path d="M10 18h10M10 28h18" stroke="#5b7fc8" strokeWidth="3" strokeLinecap="round" />
        </svg>
        <PromoText>杭萧钢构涨停所需资金*...</PromoText>
        <Chip $w={227} $h={53} $border="#f0ebea" $bg="#f8f6f6">
          <svg width="36" height="36" viewBox="0 0 36 36">
            <circle cx="18" cy="18" r="16.200" fill="none" stroke="#936c5e" strokeWidth="2.600" />
            <path d="M9 14l9 9 9-9" fill="none" stroke="#936c5e" strokeWidth="3" strokeLinecap="round" strokeLinejoin="round" />
          </svg>
          <Text $size={35.5} $color="#936c5e">神奇九转</Text>
        </Chip>
        <Chip $w={195} $h={55} $border="#dccfca" $bg="#faf6f5" $left={30}>
          <Text $size={37.5} $color="#8a6252">筹码分布</Text>
        </Chip>
      </Promo>

      <SectionTabs>
        <SectionTab>资金</SectionTab>
        <SectionTab $active>资讯</SectionTab>
        <SectionTab>公告</SectionTab>
        <SectionTab>简况</SectionTab>
        <SectionTab>财务</SectionTab>
        <SectionTab>诊断</SectionTab>
      </SectionTabs>

      <IndexRow>
        <Text $size={38.5} $color="#333">上证指数</Text>
        <Text $size={42} $color={GREEN}>4126.09</Text>
        <Text $size={42} $color={GREEN}><Num>-12.67</Num></Text>
        <Text $size={42} $color={GREEN}><Num>-0.31%</Num></Text>
        <Separator />
        <svg width="34" height="20" viewBox="0 0 34 20">
          <path d="M2 18L17 2l15 16" fill="none" stroke="#a3abbb" strokeWidth="2.400" strokeLinecap="round" strokeLinejoin="round" />
        </svg>
      </IndexRow>

      <ActionBar>
        {actions.map((a) => (
          <Action key={a.label}>
            {a.icon}
            <Text $size={38}>{a.label}</Text>
          </Action>
        ))}
      </ActionBar>

      <SystemBar>
        <SystemKey $gap={182}>
          <svg width="46" height="52" viewBox="0 0 46 52">
            <path d="M42 4v44L4 26z" fill="none" stroke="#434343" strokeWidth="4.200" strokeLinejoin="round" />
          </svg>
        </SystemKey>
        <SystemKey $gap={180}>
          <svg width="52" height="52" viewBox="0 0 52 52">
            <circle cx="26" cy="26" r="23" fill="none" stroke="#434343" strokeWidth="4.200" />
          </svg>
        </SystemKey>
        <svg width="46" height="46" viewBox="0 0 46 46">
          <rect x="2.500" y="2.500" width="41" height="41" rx="2" fill="none" stroke="#434343" strokeWidth="4.200" />
        </svg>
      </SystemBar>
    </Screen>
  );
}
